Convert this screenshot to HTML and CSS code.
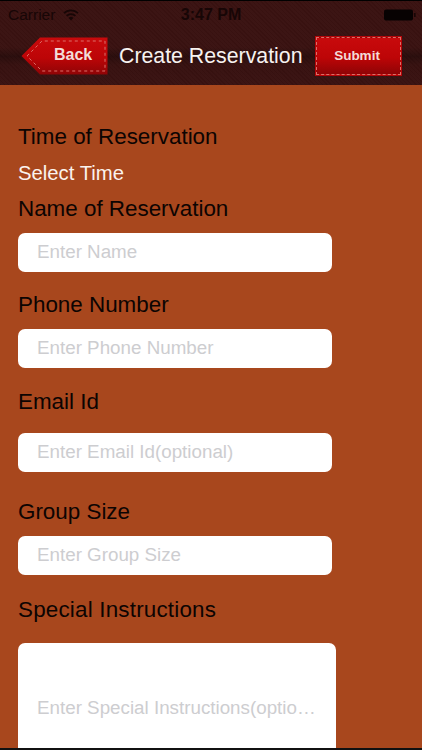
FILE: index.html
```html
<!DOCTYPE html>
<html lang="en">
<head>
    <meta charset="UTF-8">
    <meta name="viewport" content="width=device-width, initial-scale=1.0">
    <title>Create Reservation</title>
    <link rel="stylesheet" href="styles.css">
</head>
<body>

<header class="top-bar">
    <div class="status-bar">
        <div class="status-left">
            <span>Carrier</span>
            <svg class="wifi" width="16" height="12" viewBox="0 0 16 12">
                <path d="M1 4.2 A10 10 0 0 1 15 4.2" fill="none" stroke="#170606" stroke-width="1.7"/>
                <path d="M3.6 6.8 A6.4 6.4 0 0 1 12.4 6.8" fill="none" stroke="#170606" stroke-width="1.7"/>
                <path d="M8 11.6 L5.6 8.9 A3.4 3.4 0 0 1 10.4 8.9 Z" fill="#170606"/>
            </svg>
        </div>
        <span class="status-time">3:47 PM</span>
        <svg class="battery" width="32" height="12" viewBox="0 0 32 12">
            <rect x="0" y="0.5" width="29" height="11" rx="2" fill="#070202"/>
            <rect x="30" y="4" width="1.6" height="4" fill="#170606"/>
        </svg>
    </div>
    <nav class="nav-bar">
        <a class="back-btn">
            <svg class="back-shape" width="87" height="38" viewBox="0 0 87 38">
                <defs>
                    <linearGradient id="backFill" x1="0" y1="0" x2="0" y2="1">
                        <stop offset="0" stop-color="#c80a0c"/>
                        <stop offset="0.55" stop-color="#bd0507"/>
                        <stop offset="1" stop-color="#8f0406"/>
                    </linearGradient>
                </defs>
                <path d="M0.5 19 L19 0.5 H86.5 V37.5 H19 Z" fill="url(#backFill)"/>
                <path d="M6 19 L21 4 H84 V34 H21 Z" fill="none" stroke="#dc6f68" stroke-width="1" stroke-dasharray="3 3"/>
            </svg>
            <span class="back-label">Back</span>
        </a>
        <h1 class="nav-title">Create Reservation</h1>
        <a class="submit-btn">Submit</a>
    </nav>
</header>

<form class="reservation-form">
    <div class="section-label time-label">Time of Reservation</div>
    <div class="select-time">Select Time</div>

    <label class="section-label name-label" for="name">Name of Reservation</label>
    <input class="field" type="text" id="name" placeholder="Enter Name">

    <label class="section-label phone-label" for="phone">Phone Number</label>
    <input class="field" type="text" id="phone" placeholder="Enter Phone Number">

    <label class="section-label email-label" for="email">Email Id</label>
    <input class="field" type="text" id="email" placeholder="Enter Email Id(optional)">

    <label class="section-label group-label" for="group">Group Size</label>
    <input class="field" type="text" id="group" placeholder="Enter Group Size">

    <label class="section-label special-label" for="special">Special Instructions</label>
    <div class="field-large">
        <input class="field-large-input" type="text" id="special" placeholder="Enter Special Instructions(optional)">
    </div>
</form>

<div class="bottom-line"></div>

</body>
</html>
```

FILE: styles.css
```css
html, body {
    margin: 0;
    padding: 0;
}

body {
    position: relative;
    width: 422px;
    height: 750px;
    overflow: hidden;
    background-color: #a8471d;
    font-family: "Liberation Sans", Arial, sans-serif;
}

/* header */
.top-bar {
    height: 85px;
    box-sizing: border-box;
    border-top: 1px solid #000;
    background-color: #3a1211;
    background-image:
        linear-gradient(to bottom, rgba(0, 0, 0, 0) 55%, rgba(0, 0, 0, 0.28) 66%, rgba(0, 0, 0, 0.05) 76%, rgba(0, 0, 0, 0) 100%),
        repeating-linear-gradient(45deg, rgba(0, 0, 0, 0.04) 0 1px, rgba(255, 255, 255, 0.01) 1px 3px);
}

.status-bar {
    display: grid;
    grid-template-columns: 1fr auto 1fr;
    align-items: center;
    height: 28px;
    padding: 0 8px;
    font-size: 15.5px;
    color: #170606;
}

.status-left {
    display: flex;
    align-items: center;
    gap: 8px;
}

.status-time {
    font-weight: bold;
    font-size: 16px;
}

.battery {
    justify-self: end;
    margin-right: -2px;
}

.nav-bar {
    display: flex;
    align-items: center;
    height: 38px;
    margin-top: 8px;
    padding-left: 21px;
}

.back-btn {
    position: relative;
    display: block;
    width: 87px;
    height: 38px;
    flex: none;
}

.back-shape {
    display: block;
}

.back-label {
    position: absolute;
    left: 33px;
    top: 9px;
    font-size: 16px;
    font-weight: bold;
    color: #f3dcd8;
}

.nav-title {
    margin: 0 0 0 11px;
    font-size: 21.3px;
    font-weight: normal;
    color: #f7f2f0;
    white-space: nowrap;
}

.submit-btn {
    box-sizing: border-box;
    width: 85px;
    height: 38px;
    margin-left: auto;
    margin-right: 21px;
    padding-right: 3px;
    line-height: 36px;
    text-align: center;
    font-size: 13.5px;
    font-weight: bold;
    color: #f3dcd8;
    background: linear-gradient(to bottom, #c80a0c, #bd0507 55%, #8f0406);
    border: 1px dashed #dc6f68;
    outline: 1px solid #b50508;
}

/* form */
.reservation-form {
    padding: 40px 0 0 18px;
}

.section-label {
    display: block;
    height: 24px;
    line-height: 24px;
    font-size: 22.4px;
    color: #0c0402;
}

.select-time {
    height: 24px;
    line-height: 24px;
    margin-top: 12px;
    font-size: 20.3px;
    color: #fbf3ee;
}

.name-label { margin-top: 12px; margin-bottom: 12px; }
.phone-label { margin-top: 21px; margin-bottom: 12px; }
.email-label { margin-top: 22px; margin-bottom: 19px; }
.group-label { margin-top: 28px; margin-bottom: 12px; }
.special-label { margin-top: 23px; margin-bottom: 21px; letter-spacing: 0.2px; }

.field {
    display: block;
    box-sizing: border-box;
    width: 314px;
    height: 39px;
    padding: 0 19px 1px;
    border: none;
    border-radius: 7px;
    background-color: #fff;
    font-family: inherit;
    font-size: 18.8px;
}

.field-large {
    display: flex;
    align-items: center;
    box-sizing: border-box;
    width: 318px;
    height: 130px;
    padding: 0 14px 0 19px;
    border-radius: 7px;
    background-color: #fff;
}

.field-large-input {
    width: 100%;
    min-width: 0;
    padding: 0;
    border: none;
    background: none;
    font-family: inherit;
    font-size: 18.8px;
    text-overflow: ellipsis;
}

.field::placeholder,
.field-large-input::placeholder {
    color: #cdcdd0;
    opacity: 1;
}

.bottom-line {
    position: absolute;
    left: 0;
    right: 0;
    bottom: 0;
    height: 2px;
    background-color: #111;
}
```
